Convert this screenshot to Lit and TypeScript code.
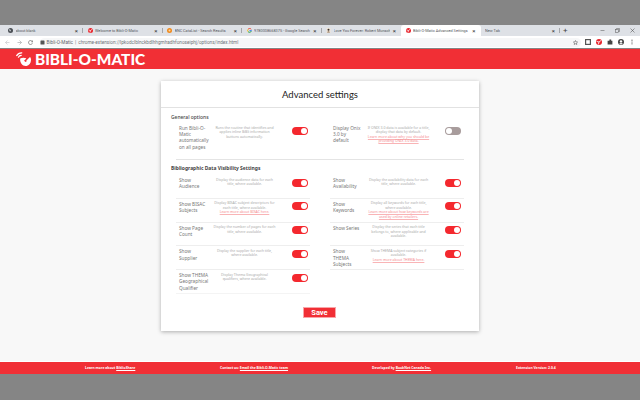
import { LitElement, html, css, svg } from "lit";
import { customElement } from "lit/decorators.js";

type Tab = { t: string; icon?: string; active?: boolean };
const TABS: Tab[] = [
  { t: "about:blank", icon: "globe" },
  { t: "Welcome to Bibli-O-Matic", icon: "bom" },
  { t: "BNC CataList - Search Results", icon: "bnc" },
  { t: "9780008668375 - Google Search", icon: "g" },
  { t: "Love You Forever: Robert Munsch", icon: "book" },
  { t: "Bibli-O-Matic Advanced Settings", icon: "bom", active: true },
  { t: "New Tab" },
];

type Row = { label: string; desc: string; link?: string };
const LEFT: Row[] = [
  { label: "Show Audience", desc: "Display the audience data for each title, where available." },
  { label: "Show BISAC Subjects", desc: "Display BISAC subject descriptors for each title, where available.", link: "Learn more about BISAC here." },
  { label: "Show Page Count", desc: "Display the number of pages for each title, where available." },
  { label: "Show Supplier", desc: "Display the supplier for each title, where available." },
  { label: "Show THEMA Geographical Qualifier", desc: "Display Thema Geographical qualifiers, where available." },
];
const RIGHT: Row[] = [
  { label: "Show Availability", desc: "Display the availability data for each title, where available." },
  { label: "Show Keywords", desc: "Display all keywords for each title, where available.", link: "Learn more about how keywords are used by online retailers." },
  { label: "Show Series", desc: "Display the series that each title belongs to, where applicable and available." },
  { label: "Show THEMA Subjects", desc: "Show THEMA subject categories if available.", link: "Learn more about THEMA here." },
];

@customElement("app-root")
export class AppRoot extends LitElement {
  static styles = css`
    :host { display: block; width: 640px; height: 400px; overflow: hidden; background: #858585; font-family: "Lato", "Noto Sans", sans-serif; }
    .gap { height: 25px; }
    .tabs { height: 11px; background: #dee1e6; display: flex; align-items: center; padding-left: 3.5px; }
    .tab { width: 79.5px; height: 11px; box-sizing: border-box; display: flex; align-items: center; gap: 2.5px; padding: 0 2px 0 4.5px; font: 3.85px "Roboto", sans-serif; color: #55585d; white-space: nowrap; overflow: hidden; position: relative; }
    .tab.sep::after { content: ""; position: absolute; right: 0; top: 3px; height: 5px; width: 1px; background: #a4a7ab; }
    .tab.active { background: #fff; border-radius: 3px 3px 0 0; }
    .fav { width: 5px; height: 5px; flex: none; }
    .tab .name { flex: 1; min-width: 0; overflow: hidden; }
    .tab .x { font-size: 6px; line-height: 6px; color: #333; flex: none; padding-right: 3px; }
    .plus { font: 8px/11px "Roboto", sans-serif; color: #444; margin-left: 3px; }
    .win { margin-left: auto; display: flex; align-items: center; gap: 10px; padding-right: 5px; color: #555; }
    .win svg { width: 5px; height: 5px; }
    .bar { height: 12px; background: #fff; display: flex; align-items: center; padding: 0 5px 0 5px; }
    .navs { display: flex; gap: 6.5px; margin-right: 6.5px; }
    .navs svg { width: 5px; height: 5px; }
    .omni { width: 543.5px; height: 9px; border-radius: 5px; background: #f6f7f8; display: flex; align-items: center; gap: 2px; padding: 0 3px 0 0; box-sizing: border-box; font: 4.7px "Roboto", sans-serif; color: #5f6368; white-space: nowrap; }
    .omni .dim { color: #70757a; }
    .omni svg { width: 5px; height: 5px; flex: none; }
    .omni .star { margin-left: auto; }
    .exts { display: flex; gap: 5px; margin-left: 4px; align-items: center; }
    .ext { width: 6px; height: 6px; flex: none; }
    .head { height: 20px; margin-top: 1px; background: #f12f35; display: flex; align-items: center; padding-left: 16px; gap: 4px; box-sizing: border-box; }
    .brand { font: 900 15.4px/20px "Lato", sans-serif; color: #fff; }
    .page { height: 293px; box-sizing: border-box; background: #f8f8f8; padding-top: 12px; }
    .card { width: 318px; height: 250px; margin-left: 161px; box-sizing: border-box; background: #fff; box-shadow: 0 1px 4px rgba(0,0,0,.3); display: flex; flex-direction: column; }
    h1 { margin: 0; height: 27px; text-align: center; font: 400 9.5px/28px "Lato", sans-serif; color: #222; border-bottom: 1px solid #e2e2e2; box-sizing: border-box; }
    .body { padding: 5px 15px 0; display: flex; flex-direction: column; }
    h2 { margin: 0 0 0 -5px; font: 700 4.95px/8px "Noto Sans", sans-serif; color: #444; }
    h2.g { font-weight: 500; }
    .grid { display: grid; grid-template-columns: 134px 134px; column-gap: 20px; }
    .general { height: 39px; border-bottom: 1px solid #e4e4e4; margin-bottom: 4px; padding-top: 2px; box-sizing: border-box; }
    .general .row { border: none; }
    .vis { grid-auto-rows: 23.8px; margin-top: 3px; }
    .row { display: grid; grid-template-columns: 33px 65px 1fr; box-sizing: border-box; border-bottom: 1px solid #eee; padding: 2px 0 0 3px; }
    .row .label { padding-right: 2.5px; }
    .row.right .label { padding-right: 5px; }
    .vis .row.last { border-bottom-color: #f4f4f4; }
    .label { font: 400 4.7px/6.2px "Noto Sans", sans-serif; color: #777; }
    .desc { font: 400 3.5px/4.5px "Noto Sans", sans-serif; color: #aaa; text-align: center; padding: 0.5px 1px 0; }
    .desc a { color: #f58a8e; text-decoration: underline #f9b4b6; display: block; }
    .toggle { width: 16px; height: 8px; border-radius: 4px; background: #f4282e; position: relative; justify-self: end; margin: 1.5px 2px 0 0; }
    .right .toggle { margin-right: 3px; }
    .toggle::after { content: ""; position: absolute; right: 1px; top: 1px; width: 6px; height: 6px; border-radius: 50%; background: #fff; }
    .toggle.off { background: #a89c9c; }
    .toggle.off::after { right: auto; left: 1px; }
    .save-wrap { display: flex; justify-content: center; margin-top: 13px; padding-right: 1px; }
    button { width: 33px; height: 11px; padding: 0; border: 1px solid #f9a5a8; background: #f12f35; color: #fff; font: 700 7.5px/9px "Roboto", sans-serif; }
    .footer { height: 12px; background: #f12f35; box-shadow: 0 -1px 0 #fff; display: grid; grid-template-columns: 135px 152px 144px 1fr; padding-left: 85px; box-sizing: border-box; color: #fff; font: 700 3.4px/12px "Noto Sans", sans-serif; white-space: nowrap; }
    .footer a { color: #fff; text-decoration: underline; }
  `;

  private fav(kind?: string) {
    switch (kind) {
      case "globe":
        return svg`<svg class="fav" viewBox="0 0 10 10"><circle cx="5" cy="5" r="5" fill="#4a4f55"/><path d="M2 2 L6 4 L5 7 L3 6Z" fill="#c8ccd0"/></svg>`;
      case "bom":
        return svg`<svg class="fav" viewBox="0 0 10 10"><circle cx="5" cy="5" r="5" fill="#e8232b"/><path d="M1 4 L5 5 L4 9 M5 5 L9 2" stroke="#fff" stroke-width="1.4" fill="none"/></svg>`;
      case "bnc":
        return svg`<svg class="fav" viewBox="0 0 10 10"><circle cx="5" cy="5" r="5" fill="#f08a1d"/><circle cx="5" cy="5" r="2" fill="#fbd9a8"/></svg>`;
      case "g":
        return svg`<svg class="fav" viewBox="0 0 10 10" fill="none" stroke-width="2"><path d="M8.5 2.5A4 4 0 0 0 2 2.8" stroke="#ea4335"/><path d="M2 2.8A4 4 0 0 0 2 7.2" stroke="#fbbc05"/><path d="M2 7.2A4 4 0 0 0 8.8 6" stroke="#34a853"/><path d="M5 5.2H9V6" stroke="#4285f4"/></svg>`;
      case "book":
        return svg`<svg class="fav" viewBox="0 0 10 10"><rect x="1" width="8" height="10" fill="#efe6d8"/><circle cx="5" cy="3.5" r="2" fill="#3a2f2a"/><path d="M2 9 Q5 4 8 9Z" fill="#8a6d57"/></svg>`;
    }
    return "";
  }

  private row(r: Row, right = false, last = false) {
    return html`<div class="row ${right ? "right" : ""} ${last ? "last" : ""}">
      <div class="label">${r.label}</div>
      <div class="desc">${r.desc}${r.link ? html`<a>${r.link}</a>` : ""}</div>
      <div class="toggle"></div>
    </div>`;
  }

  private dish() {
    return svg`<svg width="15" height="15" viewBox="0 0 15 15" fill="none">
      <path d="M4.2 6.5 C3.6 10.5 6.5 14.5 10.5 14 C13 13.5 15 11 15 8 C15 6.8 14.6 5.6 14 5 L10.4 8.6 C10.9 9.5 10 10.3 9.2 9.8 L8.6 9.2 C8 8.7 8.4 7.8 9.2 7.8 L10.3 6.2 C8.5 5.4 6 5.4 4.2 6.5Z" fill="#fff"/>
      <path d="M0.7 3.6 A5.5 5.5 0 0 1 5.8 0.8 M2.4 5.2 A3.2 3.2 0 0 1 5.2 3.4" stroke="#fff" stroke-width="1.2" stroke-linecap="round"/>
    </svg>`;
  }

  render() {
    return html`
      <div class="gap"></div>
      <div class="tabs">
        ${TABS.map((t, i) => html`<div class="tab ${t.active ? "active" : ""} ${i < 4 || i === 6 ? "sep" : ""}">
          ${this.fav(t.icon)}
          <span class="name">${t.t}</span><span class="x">×</span>
        </div>`)}
        <span class="plus">+</span>
        <div class="win">
          <svg viewBox="0 0 10 10"><path d="M1 5H9" stroke="#555"/></svg>
          <svg viewBox="0 0 10 10" fill="none" stroke="#555"><rect x="1" y="3" width="6" height="6"/><path d="M3 3V1H9V7H7"/></svg>
          <svg viewBox="0 0 10 10"><path d="M1 1L9 9M9 1L1 9" stroke="#444"/></svg>
        </div>
      </div>
      <div class="bar">
        <div class="navs">
          <svg viewBox="0 0 10 10" fill="none" stroke="#bfc1c4" stroke-width="1.2"><path d="M9 5H1M5 1L1 5L5 9"/></svg>
          <svg viewBox="0 0 10 10" fill="none" stroke="#9a9da1" stroke-width="1.2"><path d="M1 5H9M5 1L9 5L5 9"/></svg>
          <svg viewBox="0 0 10 10" fill="none" stroke="#555" stroke-width="1.2"><path d="M8.5 3A4 4 0 1 0 9 5.5M9 1V3.5H6.5"/></svg>
        </div>
        <div class="omni">
          <svg viewBox="0 0 10 10"><rect x="1" y="1" width="8" height="8" rx="1" fill="#555"/></svg>
          <span>Bibli-O-Matic</span><span class="dim">|</span><span class="dim">chrome-extension://lpkodclblnckbdlhhgmhadhfonoseiphj/options/index.html</span>
          <svg class="star" viewBox="0 0 10 10" fill="none" stroke="#444"><path d="M5 1L6.2 3.8L9.2 4.1L7 6.1L7.6 9L5 7.5L2.4 9L3 6.1L.8 4.1L3.8 3.8Z"/></svg>
        </div>
        <div class="exts">
          <svg class="ext" viewBox="0 0 10 10"><rect x="1" y="1" width="8" height="8" fill="none" stroke="#555" stroke-width="2"/></svg>
          <svg class="ext" viewBox="0 0 10 10"><circle cx="5" cy="5" r="5" fill="#e8232b"/><path d="M1 4L5 5L4 9M5 5L9 2" stroke="#fff" stroke-width="1.4" fill="none"/></svg>
          <svg class="ext" viewBox="0 0 10 10"><path d="M1 3h3V1h3v2h2v6H1z" fill="#444"/></svg>
          <svg class="ext" viewBox="0 0 10 10"><circle cx="5" cy="5" r="5" fill="#444"/><circle cx="5" cy="4" r="2" fill="#fff"/><path d="M2 8Q5 5 8 8Q5 10 2 8Z" fill="#fff"/></svg>
          <svg class="ext" viewBox="0 0 10 10"><circle cx="5" cy="2" r="1" fill="#555"/><circle cx="5" cy="5" r="1" fill="#555"/><circle cx="5" cy="8" r="1" fill="#555"/></svg>
        </div>
      </div>
      <div class="head">${this.dish()}<span class="brand">BIBLI-O-MATIC</span></div>
      <div class="page">
        <div class="card">
          <h1>Advanced settings</h1>
          <div class="body">
            <h2 class="g">General options</h2>
            <div class="grid general">
              <div class="row">
                <div class="label">Run Bibli-O-Matic automatically on all pages</div>
                <div class="desc">Runs the routine that identifies and<br />applies inline BiBli information<br />buttons automatically.</div>
                <div class="toggle"></div>
              </div>
              <div class="row right">
                <div class="label">Display Onix 3.0 by default</div>
                <div class="desc">If ONIX 3.0 data is available for a title, display that data by default.<a>Learn more about why you should be providing ONIX 3.0 data.</a></div>
                <div class="toggle off"></div>
              </div>
            </div>
            <h2>Bibliographic Data Visibility Settings</h2>
            <div class="grid vis">
              ${this.row(LEFT[0])}${this.row(RIGHT[0], true)}
              ${this.row(LEFT[1])}${this.row(RIGHT[1], true)}
              ${this.row(LEFT[2])}${this.row(RIGHT[2], true)}
              ${this.row(LEFT[3])}${this.row(RIGHT[3], true)}
              ${this.row(LEFT[4], false, true)}
            </div>
            <div class="save-wrap"><button>Save</button></div>
          </div>
        </div>
      </div>
      <div class="footer">
        <span>Learn more about <a>BiblioShare</a></span>
        <span>Contact us: <a>Email the Bibli-O-Matic team</a></span>
        <span>Developed by <a>BookNet Canada Inc.</a></span>
        <span>Extension Version: 2.0.4</span>
      </div>
    `;
  }
}
